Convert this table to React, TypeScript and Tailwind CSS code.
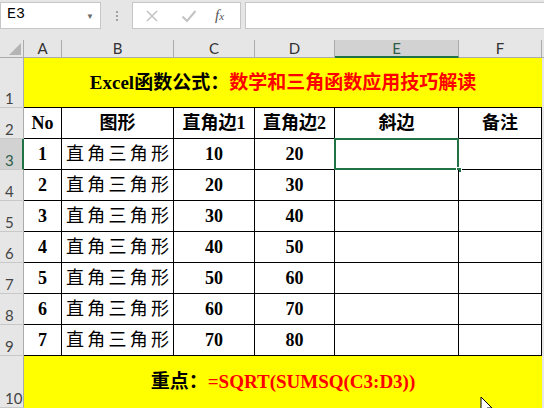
import React from "react";

const serif = "font-['Liberation_Serif','Noto_Sans_CJK_SC',serif]";

const cols = ["A", "B", "C", "D", "E", "F"];
const rows = [
  { no: 1, a: 10, b: 20 },
  { no: 2, a: 20, b: 30 },
  { no: 3, a: 30, b: 40 },
  { no: 4, a: 40, b: 50 },
  { no: 5, a: 50, b: 60 },
  { no: 6, a: 60, b: 70 },
  { no: 7, a: 70, b: 80 },
];

function RowHead({ n, selected }: { n: number; selected?: boolean }) {
  return (
    <div
      className={
        "flex items-end pl-[5px] pb-[1px] text-[15px] leading-none font-['Lato',sans-serif] border-b border-[#c8c8c8] " +
        (selected
          ? "bg-[#d2d2d2] text-[#2e5d4a] border-r-2 border-r-[#217346]"
          : "bg-[#e6e6e6] text-[#444] border-r border-r-[#ababab]")
      }
    >
      {n}
    </div>
  );
}

function Cell({
  children,
  bold = true,
  spread = false,
  className = "",
}: {
  children?: React.ReactNode;
  bold?: boolean;
  spread?: boolean;
  className?: string;
}) {
  return (
    <div
      className={
        "flex items-center border-r border-b border-black bg-white text-[18px] text-black " +
        serif +
        (spread ? " justify-between px-[4px]" : " justify-center") +
        (bold ? " font-bold " : " ") +
        className
      }
    >
      {children}
    </div>
  );
}

export default function App() {
  return (
    <div className="relative w-[544px] h-[408px] overflow-hidden bg-[#e6e6e6]">
      {/* Formula bar */}
      <div className="flex h-[40px] pt-[2px]">
        <div className="flex h-[27px] w-[101px] items-center justify-between border border-[#c6c6c6] bg-white pl-[6px] pr-[6px]">
          <span className="font-['Liberation_Mono',monospace] text-[15px] text-black">E3</span>
          <span className="text-[8px] text-[#6a6a6a]">▼</span>
        </div>
        <div className="flex w-[31px] h-[27px] flex-col items-center justify-center gap-[2px]">
          <span className="h-[2px] w-[2px] bg-[#a0a0a0]" />
          <span className="h-[2px] w-[2px] bg-[#a0a0a0]" />
          <span className="h-[2px] w-[2px] bg-[#a0a0a0]" />
        </div>
        <div className="flex h-[27px] w-[109px] items-center border border-[#c6c6c6] bg-white">
          <svg width="14" height="14" viewBox="0 0 14 14" className="ml-[12px]">
            <path d="M2 2 L12 12 M12 2 L2 12" stroke="#c3c3c3" strokeWidth="1.5" />
          </svg>
          <svg width="16" height="14" viewBox="0 0 16 14" className="ml-[22px]">
            <path d="M1.5 7.5 L6 12 L14.5 2" stroke="#c3c3c3" strokeWidth="2" fill="none" />
          </svg>
          <span className="ml-[18px] font-['Liberation_Serif',serif] italic text-[15px] text-[#555]">
            f<span className="text-[11px]">x</span>
          </span>
        </div>
        <div className="ml-[4px] h-[27px] flex-1 border-y border-l border-[#c6c6c6] bg-white" />
      </div>

      {/* Sheet */}
      <div className="grid grid-cols-[24px_38px_112px_81px_80px_124px_83px_2px] grid-rows-[18px_50px_31px_31px_31px_31px_31px_31px_31px_31px_52px]">
        {/* column headers */}
        <div className="relative border-r border-b border-[#ababab] bg-[#e6e6e6]">
          <svg width="12" height="12" viewBox="0 0 12 12" className="absolute right-[2px] bottom-[2px]">
            <path d="M12 0 L12 12 L0 12 Z" fill="#b4b4b4" />
          </svg>
        </div>
        {cols.map((c) => (
          <div
            key={c}
            className={
              "flex items-center justify-center font-['Lato',sans-serif] text-[15px] leading-none " +
              (c === "E"
                ? "bg-[#d2d2d2] border-r border-r-[#ababab] border-b-2 border-b-[#217346] text-[#2e5d4a]"
                : "bg-[#e6e6e6] border-r border-b border-[#ababab] text-[#333]")
            }
          >
            {c}
          </div>
        ))}
        <div className="border-b border-[#ababab] bg-[#e6e6e6]" />

        {/* row 1 */}
        <RowHead n={1} />
        <div
          className={
            "col-span-6 flex items-center justify-center bg-[#ffff00] text-[19px] font-bold border-b border-black pt-[2px] " +
            serif
          }
        >
          <span className="text-black">Excel函数公式：</span>
          <span className="text-[#ff0000]">数学和三角函数应用技巧解读</span>
        </div>
        <div className="bg-[#e6e6e6]" />

        {/* row 2 */}
        <RowHead n={2} />
        <Cell>No</Cell>
        <Cell>图形</Cell>
        <Cell>直角边1</Cell>
        <Cell>直角边2</Cell>
        <Cell>斜边</Cell>
        <Cell>备注</Cell>
        <div className="bg-[#e6e6e6]" />

        {rows.map((r, i) => (
          <React.Fragment key={r.no}>
            <RowHead n={i + 3} selected={i === 0} />
            <Cell>{r.no}</Cell>
            <Cell bold={false} spread>
              {"直角三角形".split("").map((ch, k) => (
                <span key={k}>{ch}</span>
              ))}
            </Cell>
            <Cell>{r.a}</Cell>
            <Cell>{r.b}</Cell>
            <Cell className="relative">
              {i === 0 && (
                <>
                  <div className="absolute -left-[1px] -top-[1px] -right-[1px] -bottom-[1px] border-2 border-[#217346]" />
                  <div className="absolute -right-[4px] -bottom-[4px] h-[6px] w-[6px] border border-white bg-[#217346]" />
                </>
              )}
            </Cell>
            <Cell />
            <div className="bg-[#e6e6e6]" />
          </React.Fragment>
        ))}

        {/* row 10 */}
        <RowHead n={10} />
        <div
          className={
            "col-span-6 flex items-center justify-center bg-[#ffff00] text-[19px] font-bold " +
            serif
          }
        >
          <span className="text-black">重点：</span>
          <span className="text-[#ff0000]">=SQRT(SUMSQ(C3:D3))</span>
        </div>
        <div className="bg-[#e6e6e6]" />
      </div>

      {/* mouse pointer */}
      <svg width="14" height="22" viewBox="0 0 14 22" className="absolute left-[480px] top-[396px]">
        <path d="M1 1 L1 17 L5 13 L8 20 L10 19 L7 12 L12 12 Z" fill="white" stroke="black" strokeWidth="1" />
      </svg>
    </div>
  );
}
